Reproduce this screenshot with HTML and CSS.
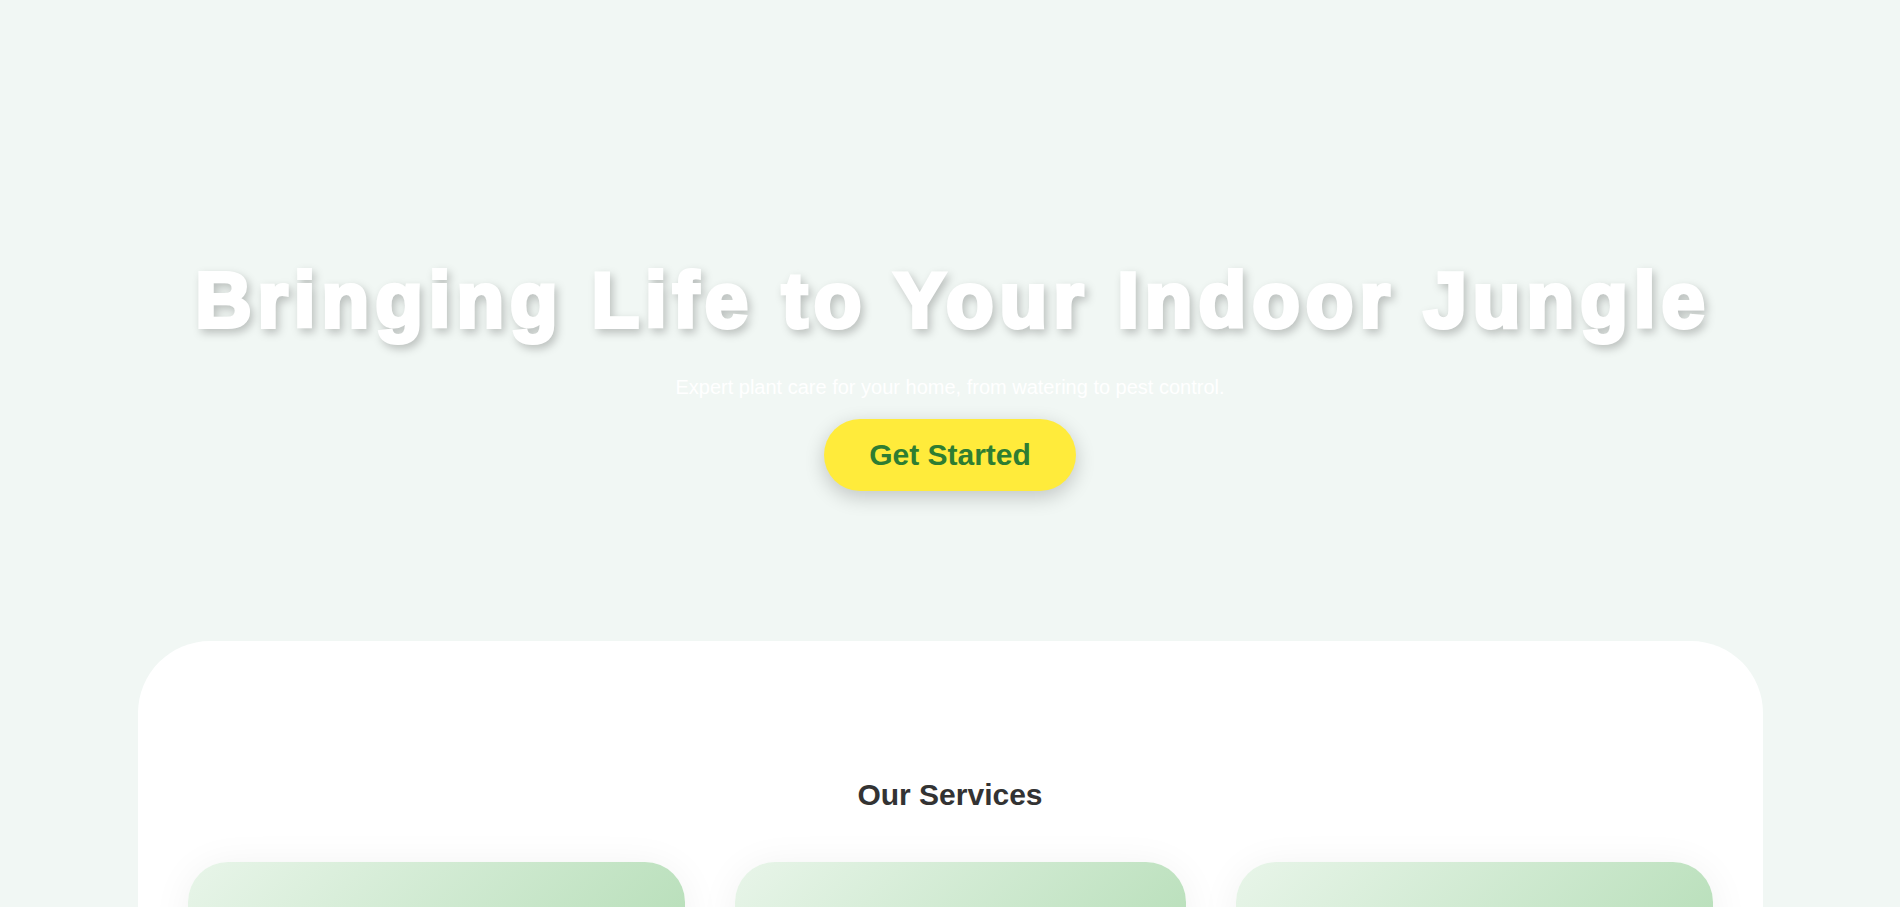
FILE: index.html
```html
<!DOCTYPE html>
<html lang="en">
<head>
<meta charset="utf-8">
<title>Indoor Jungle Plant Care</title>
<link rel="stylesheet" href="styles.css">
</head>
<body>
  <section class="hero">
    <h1 class="hero-title">Bringing Life to Your Indoor Jungle</h1>
    <p class="hero-sub">Expert plant care for your home, from watering to pest control.</p>
    <a class="hero-btn" href="#services">Get Started</a>
  </section>
  <section class="services" id="services">
    <h2 class="services-title">Our Services</h2>
    <div class="service-grid">
      <div class="service-card"></div>
      <div class="service-card"></div>
      <div class="service-card"></div>
    </div>
  </section>
</body>
</html>
```

FILE: styles.css
```css
* { box-sizing: border-box; }

html, body {
  margin: 0;
  padding: 0;
}

body {
  background: #f1f7f4;
  font-family: "Liberation Sans", Arial, sans-serif;
  color: #333;
}

.hero {
  display: flex;
  flex-direction: column;
  align-items: center;
  text-align: center;
  padding-top: 252px;
}

.hero-title {
  margin: 0;
  padding-left: 6px;
  font-size: 78px;
  line-height: 96px;
  font-weight: 700;
  letter-spacing: 6px;
  color: #fff;
  -webkit-text-stroke: 4px #fff;
  filter: drop-shadow(3px 4px 4px rgba(0, 0, 0, 0.22));
}

.hero-sub {
  margin: 27px 0 0;
  font-size: 20px;
  line-height: 24px;
  color: #fff;
}

.hero-btn {
  margin-top: 20px;
  display: inline-block;
  padding: 19px 45px;
  font-size: 30px;
  line-height: 34px;
  font-weight: 700;
  color: #2e7d32;
  background: #ffeb3b;
  border-radius: 40px;
  text-decoration: none;
  box-shadow: 0 6px 20px rgba(0, 0, 0, 0.2);
}

.services {
  width: 1625px;
  margin: 150px auto 0;
  background: #fff;
  border-radius: 72px 72px 0 0;
  padding: 136px 50px 60px;
}

.services-title {
  margin: 0;
  text-align: center;
  font-size: 30px;
  line-height: 36px;
  font-weight: 700;
  color: #333;
}

.service-grid {
  margin-top: 49px;
  display: grid;
  grid-template-columns: 497fr 451fr 477fr;
  column-gap: 50px;
}

.service-card {
  min-height: 300px;
  border-radius: 40px;
  background: linear-gradient(135deg, #e8f5e9 0%, #a5d6a7 100%);
  box-shadow: 0 4px 40px rgba(0, 0, 0, 0.06);
}
```
